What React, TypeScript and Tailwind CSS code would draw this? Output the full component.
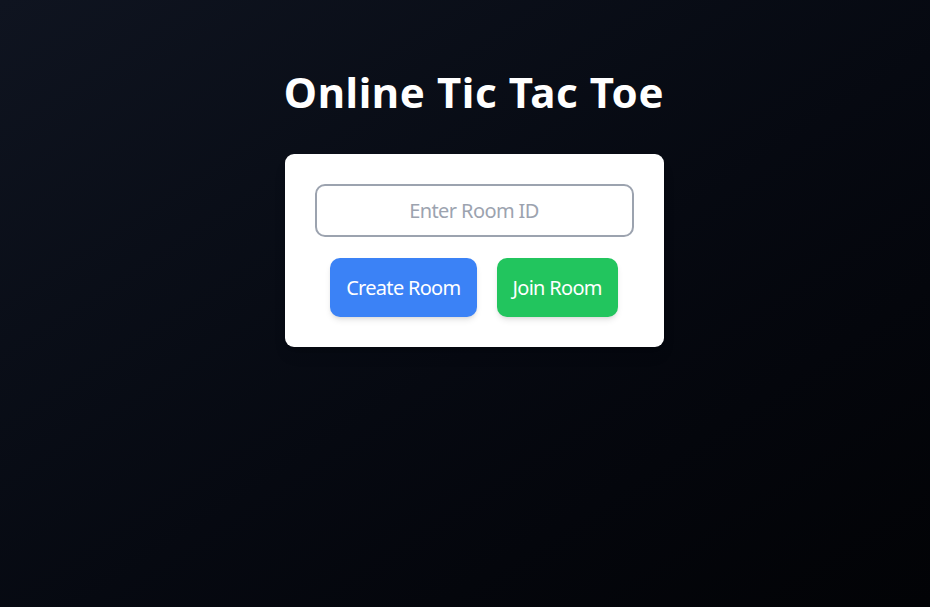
const App = () => {
  return (
    <div className="min-h-screen w-full bg-gradient-to-br from-[#0f1420] to-[#020306] flex flex-col items-center pt-[69px] pl-[18px] font-['Noto_Sans','Open_Sans',sans-serif]">
      <h1 className="text-[42px] leading-[46px] font-bold text-white tracking-[0.6px] mb-[39px]">
        Online Tic Tac Toe
      </h1>
      <div className="bg-white rounded-[9px] p-[30px] flex flex-col items-center shadow-lg">
        <input
          type="text"
          placeholder="Enter Room ID"
          className="w-[319px] h-[53px] border-2 border-[#9ca3af] rounded-[10px] text-center text-xl tracking-[-0.6px] text-gray-700 placeholder:text-[#9ca3af] outline-none"
        />
        <div className="flex gap-5 mt-[21px]">
          <button className="bg-[#3b82f6] text-white text-xl tracking-[-0.7px] px-[16px] h-[59px] rounded-[10px] shadow-md">
            Create Room
          </button>
          <button className="bg-[#22c55e] text-white text-xl tracking-[-0.7px] px-[16px] h-[59px] rounded-[10px] shadow-md">
            Join Room
          </button>
        </div>
      </div>
    </div>
  );
};

export default App;
